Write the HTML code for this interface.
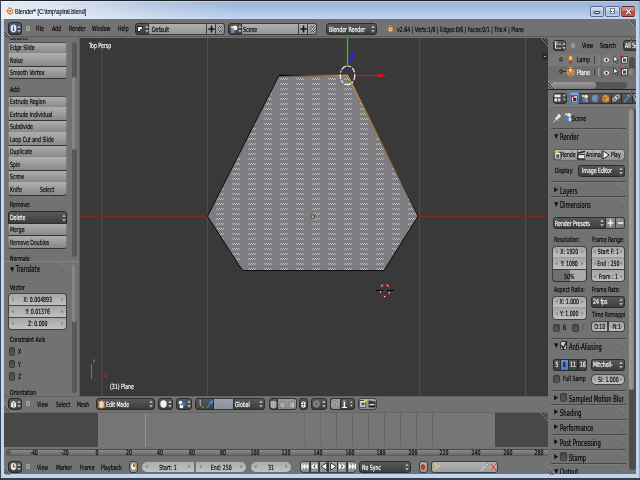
<!DOCTYPE html>
<html><head><meta charset="utf-8"><title>Blender</title>
<style>
html,body{margin:0;padding:0;width:640px;height:480px;overflow:hidden;background:#727272}
#w{position:absolute;left:0;top:0;width:640px;height:480px;overflow:hidden;background:#cfdcee;font-family:"DejaVu Sans","Liberation Sans",sans-serif}
#w div,#w span,#w svg{position:absolute;box-sizing:border-box}
.t{font-size:7px;line-height:8px;white-space:nowrap;transform:scaleX(.665);transform-origin:0 0;color:#000;filter:blur(.25px);-webkit-text-stroke:.18px}
.w{color:#fff}
.p{font-size:8.1px;line-height:9px;transform:scaleX(.65)}
.c{text-align:center;transform-origin:50% 0}
.hd{background:#727272}
.btn{background:linear-gradient(#adadad,#898989);border-left:1px solid rgba(40,40,40,.28);border-right:1px solid rgba(40,40,40,.28);border-radius:2px}
.dk{background:linear-gradient(#585858,#3e3e3e);border:1px solid #2c2c2c;border-radius:2.5px}
.num{background:linear-gradient(#a6a6a6,#c0c0c0);border:1px solid rgba(20,20,20,.7)}
.lt{background:linear-gradient(#afafaf,#959595);border:1px solid #3e3e3e}
.sep{height:1px;background:#4e4e4e;left:551px;width:75px}
.chk{background:linear-gradient(#464646,#595959);border:1px solid #3a3a3a;border-radius:2px;width:7px;height:9px}
.trk{background:#575757;border-radius:3px}
.thm{background:linear-gradient(90deg,#8e8e8e,#6e6e6e);border-radius:3px}
</style></head><body>
<div id="w">
<!-- window frame -->
<div style="left:0;top:0;width:640px;height:19px;background:linear-gradient(90deg,rgba(255,255,255,.72) 0,rgba(255,255,255,.6) 60px,rgba(255,255,255,.25) 150px,rgba(255,255,255,0) 240px),linear-gradient(#b6cfec 0,#b6cfec 1.6px,#9bb5d6 2.2px,#a6bedd 8px,#b4cae7 14px,#bfd5f0 18.5px)"></div>
<div style="left:0;top:19px;width:640px;height:461px;background:#bdd6f2"></div>
<div style="left:0;top:0;width:640px;height:1px;background:#1e2028"></div>
<div style="left:0;top:0;width:1px;height:480px;background:#3a4656"></div>
<div style="left:639px;top:1px;width:1px;height:479px;background:#3cc8f0"></div>
<div style="left:636px;top:19px;width:3px;height:459px;background:linear-gradient(90deg,#bcd6f0,#c8d4ec)"></div>
<div style="left:0;top:478.3px;width:640px;height:2px;background:#3a3d44"></div>
<span class="t" id="title" style="left:14.5px;top:6.5px;font-family:'Liberation Sans',sans-serif;font-size:7.5px;line-height:9px;color:#15152a;transform:scaleX(.73);-webkit-text-stroke:.2px #15152a">Blender* [C:\tmp\spiral.blend]</span>
<svg style="left:4.5px;top:6px" width="9" height="9" viewBox="0 0 9 9"><path d="M.4 5.4L4 2L3.2 1.2H5L7.6 3.2A3.2 3.2 0 1 1 2 5.4z" fill="#e8820e"/><circle cx="5.2" cy="5" r="1.9" fill="#fff"/><circle cx="5.2" cy="5" r="1" fill="#2a5aa0"/></svg>
<!-- caption buttons -->
<div style="left:590px;top:6px;width:14px;height:10.6px;border:1px solid #5c6c8c;border-radius:2px;background:linear-gradient(#c6d8f0 0,#c0d2ec 45%,#a2bade 50%,#aec4e4 100%);box-shadow:inset 0 0 0 .6px rgba(255,255,255,.55)"></div>
<div style="left:593.8px;top:10.9px;width:6.4px;height:3.2px;background:#f4f4f4;border:1px solid #3a4050;border-radius:1px"></div>
<div style="left:605.4px;top:6px;width:14.3px;height:10.6px;border:1px solid #5c6c8c;border-radius:2px;background:linear-gradient(#c6d8f0 0,#c0d2ec 45%,#a2bade 50%,#aec4e4 100%);box-shadow:inset 0 0 0 .6px rgba(255,255,255,.55)"></div>
<div style="left:610.2px;top:8.4px;width:5.2px;height:5.4px;background:#f8f8f8;border:.6px solid #7a8498"></div>
<div style="left:611.4px;top:10.6px;width:1.1px;height:1.1px;background:#2a3040"></div><div style="left:613.2px;top:10.6px;width:1.1px;height:1.1px;background:#2a3040"></div>
<div style="left:621.2px;top:6px;width:13.6px;height:10.6px;border:1px solid #6a2424;border-left-color:#a04a40;border-right-color:#a04a40;border-radius:2px;background:linear-gradient(#dc9486 0,#d47c6c 45%,#c4462c 50%,#cc5a3c 100%)"></div>
<svg style="left:625px;top:7.8px" width="7" height="7" viewBox="0 0 7 7"><path d="M1 .8L6 6.2M6 .8L1 6.2" stroke="#3a2020" stroke-width="2.2"/><path d="M1 .8L6 6.2M6 .8L1 6.2" stroke="#fff" stroke-width="1.3"/></svg>
<!-- info header -->
<div class="hd" id="info" style="left:4px;top:19px;width:632px;height:19px">
<div class="dk" style="left:4px;top:3px;width:13.5px;height:13px;border-radius:3px"></div>
<svg style="left:5.5px;top:5px" width="7" height="9" viewBox="0 0 7 9"><ellipse cx="3.5" cy="4.5" rx="3.2" ry="4.2" fill="#e8ecf4" stroke="#3a5a9a" stroke-width=".8"/><path d="M3.5 3.6V7M3.5 1.8v1" stroke="#2a4a90" stroke-width="1.3"/></svg>
<svg style="left:13px;top:5.5px" width="4" height="8" viewBox="0 0 4 8"><path d="M2 0.3L3.8 3H.2zM2 7.7L3.8 5H.2z" fill="#b0b0b0"/></svg>
<div style="left:22px;top:6.5px;width:4.2px;height:5.2px;background:#8c8c8c;border:1px solid #a6a6a6;border-radius:1px"></div>
<span class="t" style="left:32px;top:6.4px">File</span>
<span class="t" style="left:48px;top:6.4px">Add</span>
<span class="t" style="left:64.5px;top:6.4px">Render</span>
<span class="t" style="left:87.5px;top:6.4px">Window</span>
<span class="t" style="left:113.5px;top:6.4px">Help</span>
<!-- screen selector -->
<div class="dk" style="left:131px;top:4px;width:14px;height:11.5px;border-radius:3px 0 0 3px"></div>
<div style="left:133px;top:6.5px;width:6px;height:6.5px;background:#f4f4f4;border:1px solid #222"></div><div style="left:136px;top:9.5px;width:3px;height:3.5px;background:#444"></div>
<svg style="left:140.5px;top:6px" width="4" height="8" viewBox="0 0 4 8"><path d="M2 0.3L3.8 3H.2zM2 7.7L3.8 5H.2z" fill="#b0b0b0"/></svg>
<div class="lt" style="left:145px;top:4px;width:58px;height:11.5px;border-left:0"></div>
<span class="t" style="left:148px;top:6.9px">Default</span>
<div class="lt" style="left:203px;top:4px;width:9px;height:11.5px;border-left:0"></div>
<svg style="left:204px;top:6px" width="7" height="8" viewBox="0 0 7 8"><path d="M3.5 .5V7.5M.3 4H6.7" stroke="#111" stroke-width="1.5"/></svg>
<div class="lt" style="left:212px;top:4px;width:8.5px;height:11.5px;border-left:0;border-radius:0 3px 3px 0"></div>
<svg style="left:213px;top:6px" width="7" height="8" viewBox="0 0 7 8"><path d="M1.2 1.2L5.8 6.8M5.8 1.2L1.2 6.8" stroke="#2a2a2a" stroke-width="2"/><path d="M1.2 1.2L5.8 6.8M5.8 1.2L1.2 6.8" stroke="#f4f4f4" stroke-width="1"/></svg>
<!-- scene selector -->
<div class="dk" style="left:223.5px;top:4px;width:14.5px;height:11.5px;border-radius:3px 0 0 3px"></div>
<svg style="left:225.5px;top:5.5px" width="8" height="9" viewBox="0 0 8 9"><circle cx="5" cy="3" r="2.4" fill="#f4f4f8"/><rect x="1" y="3.5" width="3.4" height="4.6" fill="#5a8ad8"/><circle cx="2" cy="2.2" r="1.3" fill="#f0d040"/></svg>
<svg style="left:233.5px;top:6px" width="4" height="8" viewBox="0 0 4 8"><path d="M2 0.3L3.8 3H.2zM2 7.7L3.8 5H.2z" fill="#b0b0b0"/></svg>
<div class="lt" style="left:238px;top:4px;width:57px;height:11.5px;border-left:0"></div>
<span class="t" style="left:239px;top:6.9px">Scene</span>
<div class="lt" style="left:295px;top:4px;width:9px;height:11.5px;border-left:0"></div>
<svg style="left:296px;top:6px" width="7" height="8" viewBox="0 0 7 8"><path d="M3.5 .5V7.5M.3 4H6.7" stroke="#111" stroke-width="1.5"/></svg>
<div class="lt" style="left:304px;top:4px;width:9px;height:11.5px;border-left:0;border-radius:0 3px 3px 0"></div>
<svg style="left:305px;top:6px" width="7" height="8" viewBox="0 0 7 8"><path d="M1.2 1.2L5.8 6.8M5.8 1.2L1.2 6.8" stroke="#2a2a2a" stroke-width="2"/><path d="M1.2 1.2L5.8 6.8M5.8 1.2L1.2 6.8" stroke="#f4f4f4" stroke-width="1"/></svg>
<!-- engine -->
<div class="dk" style="left:321.5px;top:4px;width:51.5px;height:11.5px;border-radius:3px"></div>
<span class="t w" style="left:324.5px;top:6.9px">Blender Render</span>
<svg style="left:367px;top:6px" width="4" height="8" viewBox="0 0 4 8"><path d="M2 0.3L3.8 3H.2zM2 7.7L3.8 5H.2z" fill="#b0b0b0"/></svg>
<svg style="left:381.5px;top:6px" width="8" height="8" viewBox="0 0 8 8"><path d="M0.2 4.6L3.6 1.2L3 .6h1.6L7 2.6A2.9 2.9 0 1 1 1.6 4.6z" fill="#e87a0c"/><circle cx="4.6" cy="4.4" r="1.7" fill="#fff"/><circle cx="4.6" cy="4.4" r=".9" fill="#2a5aa0"/></svg>
<span class="t" id="stats" style="left:392.5px;top:6.9px">v2.64 | Verts:1/6 | Edges:0/6 | Faces:0/1 | Tris:4 | Plane</span>
<div id="infoline" style="left:0;top:17.4px;width:632px;height:1px;background:#5a5a5a"></div>
</div>
<!-- tool shelf -->
<div id="tools" style="left:4px;top:38px;width:76px;height:358px;background:#727272;overflow:hidden">
<span class="t" style="left:6px;top:-4.5px;">Deform:</span>
<div class="btn" style="left:3.8px;top:3.6000000000000014px;width:59.2px;height:12.5px;border-radius:3px 3px 0 0;border-bottom:1px solid rgba(25,25,25,0);border-top:1px solid rgba(50,50,50,.7);"></div>
<span class="t" style="left:5.9px;top:6.300000000000002px;">Edge Slide</span>
<div class="btn" style="left:3.8px;top:16.1px;width:59.2px;height:12.5px;border-radius:0;border-bottom:1px solid rgba(25,25,25,.8);"></div>
<span class="t" style="left:5.9px;top:18.8px;">Noise</span>
<div class="btn" style="left:3.8px;top:28.599999999999994px;width:59.2px;height:12.5px;border-radius:0 0 3px 3px;border-bottom:1px solid rgba(25,25,25,.8);"></div>
<span class="t" style="left:5.9px;top:31.299999999999994px;">Smooth Vertex</span>
<span class="t" style="left:6px;top:48px;">Add:</span>
<div class="btn" style="left:3.8px;top:57.5px;width:59.2px;height:12.5px;border-radius:3px 3px 0 0;border-bottom:1px solid rgba(25,25,25,0);border-top:1px solid rgba(50,50,50,.7);"></div>
<span class="t" style="left:5.9px;top:60.2px;">Extrude Region</span>
<div class="btn" style="left:3.8px;top:70.0px;width:59.2px;height:12.5px;border-radius:0;border-bottom:1px solid rgba(25,25,25,.8);"></div>
<span class="t" style="left:5.9px;top:72.7px;">Extrude Individual</span>
<div class="btn" style="left:3.8px;top:82.5px;width:59.2px;height:12.5px;border-radius:0;border-bottom:1px solid rgba(25,25,25,0);"></div>
<span class="t" style="left:5.9px;top:85.2px;">Subdivide</span>
<div class="btn" style="left:3.8px;top:95.0px;width:59.2px;height:12.5px;border-radius:0;border-bottom:1px solid rgba(25,25,25,.8);"></div>
<span class="t" style="left:5.9px;top:97.7px;">Loop Cut and Slide</span>
<div class="btn" style="left:3.8px;top:107.5px;width:59.2px;height:12.5px;border-radius:0;border-bottom:1px solid rgba(25,25,25,0);"></div>
<span class="t" style="left:5.9px;top:110.2px;">Duplicate</span>
<div class="btn" style="left:3.8px;top:120.0px;width:59.2px;height:12.5px;border-radius:0;border-bottom:1px solid rgba(25,25,25,.8);"></div>
<span class="t" style="left:5.9px;top:122.7px;">Spin</span>
<div class="btn" style="left:3.8px;top:132.5px;width:59.2px;height:12.5px;border-radius:0;border-bottom:1px solid rgba(25,25,25,0);"></div>
<span class="t" style="left:5.9px;top:135.2px;">Screw</span>
<div class="btn" style="left:3.8px;top:145.0px;width:59.2px;height:12.5px;border-radius:0 0 3px 3px;border-bottom:1px solid rgba(25,25,25,.8);"></div>
<span class="t" style="left:5.9px;top:147.7px;">Knife</span>
<span class="t" style="left:35.5px;top:147.7px;">Select</span>
<span class="t" style="left:6px;top:163.3px;">Remove:</span>
<div class="dk" style="left:3.8px;top:173.2px;width:59.2px;height:12.8px;border-radius:3px 3px 0 0;"></div>
<span class="t w" style="left:5.9px;top:175.89999999999998px;">Delete</span>
<svg style="left:58px;top:175.5px" width="4" height="8" viewBox="0 0 4 8"><path d="M2 0.3L3.8 3H.2zM2 7.7L3.8 5H.2z" fill="#b0b0b0"/></svg>
<div class="btn" style="left:3.8px;top:185.7px;width:59.2px;height:12.5px;border-radius:0;border-bottom:1px solid rgba(25,25,25,.8);"></div>
<span class="t" style="left:5.9px;top:188.39999999999998px;">Merge</span>
<div class="btn" style="left:3.8px;top:198.2px;width:59.2px;height:12.5px;border-radius:0 0 3px 3px;border-bottom:1px solid rgba(25,25,25,.8);"></div>
<span class="t" style="left:5.9px;top:200.89999999999998px;">Remove Doubles</span>
<span class="t" style="left:6px;top:216.9px;">Normals:</span>
<div class="trk" style="left:67.5px;top:3.5px;width:5.5px;height:215px"></div>
<div class="thm" style="left:67.5px;top:38.5px;width:5.5px;height:73px"></div>
<div style="left:0;top:222.5px;width:76px;height:140px;background:#727272;border-top:1px solid #858585"></div>
<svg style="left:6px;top:228.60000000000002px" width="4.4" height="5" viewBox="0 0 4.4 5"><path d="M.1 .3H4.3L2.2 4.9z" fill="#111"/></svg>
<span class="t p" style="left:11.5px;top:226.7px;">Translate</span>
<svg style="left:54px;top:224px" width="9" height="10" viewBox="0 0 9 10"><path d="M1 1L8 6M1 3.5L8 8.5" stroke="#8c8c8c" stroke-width="1"/><path d="M1 2L8 7M1 4.5L8 9.5" stroke="#5a5a5a" stroke-width=".7"/></svg>
<span class="t" style="left:5.5px;top:245.60000000000002px;">Vector</span>
<div class="num" style="left:3.5px;top:255.2px;width:59.5px;height:12.8px;border-radius:4px 4px 0 0"></div>
<span class="t c" style="left:3.5px;top:258.0px;width:59.5px">X: 0.004893</span>
<svg style="left:7px;top:259.2px" width="3" height="5" viewBox="0 0 3 5"><path d="M2.6 .6V4.4L.4 2.5z" fill="#858585"/></svg>
<svg style="left:56.5px;top:259.2px" width="3" height="5" viewBox="0 0 3 5"><path d="M.4 .6V4.4L2.6 2.5z" fill="#858585"/></svg>
<div class="num" style="left:3.5px;top:267.2px;width:59.5px;height:12.8px;border-radius:0"></div>
<span class="t c" style="left:3.5px;top:270.0px;width:59.5px">Y: 0.01376</span>
<svg style="left:7px;top:271.2px" width="3" height="5" viewBox="0 0 3 5"><path d="M2.6 .6V4.4L.4 2.5z" fill="#858585"/></svg>
<svg style="left:56.5px;top:271.2px" width="3" height="5" viewBox="0 0 3 5"><path d="M.4 .6V4.4L2.6 2.5z" fill="#858585"/></svg>
<div class="num" style="left:3.5px;top:279.2px;width:59.5px;height:12.8px;border-radius:0 0 4px 4px"></div>
<span class="t c" style="left:3.5px;top:282.0px;width:59.5px">Z: 0.000</span>
<svg style="left:7px;top:283.2px" width="3" height="5" viewBox="0 0 3 5"><path d="M2.6 .6V4.4L.4 2.5z" fill="#858585"/></svg>
<svg style="left:56.5px;top:283.2px" width="3" height="5" viewBox="0 0 3 5"><path d="M.4 .6V4.4L2.6 2.5z" fill="#858585"/></svg>
<span class="t" style="left:5.5px;top:298.2px;">Constraint Axis</span>
<div class="chk" style="left:4.5px;top:309.3px;width:6.5px;height:8.6px"></div>
<span class="t" style="left:13.5px;top:310.3px;">X</span>
<div class="chk" style="left:4.5px;top:321.7px;width:6.5px;height:8.6px"></div>
<span class="t" style="left:13.5px;top:322.7px;">Y</span>
<div class="chk" style="left:4.5px;top:334.1px;width:6.5px;height:8.6px"></div>
<span class="t" style="left:13.5px;top:335.1px;">Z</span>
<span class="t" style="left:5.5px;top:351px;">Orientation</span>
<div class="trk" style="left:67.5px;top:225.5px;width:5.5px;height:129px"></div>
<div class="thm" style="left:67.5px;top:225.5px;width:5.5px;height:58.5px"></div>
<div style="left:75px;top:0;width:1px;height:358px;background:#5e5e5e"></div>
</div>
<!-- viewport -->
<div id="vp" style="left:80px;top:38px;width:468px;height:358px;background:#393939;overflow:hidden">
<svg style="left:0;top:0" width="468" height="358" viewBox="80 38 468 358">
<defs>
<clipPath id="hx"><polygon points="279.5,76 347.5,76 417.3,216.3 383.5,270 243,270 208.3,216.3"/></clipPath>
<linearGradient id="eg" x1="279" x2="348" y1="0" y2="0" gradientUnits="userSpaceOnUse"><stop offset="0" stop-color="#000"/><stop offset=".35" stop-color="#5a3a08"/><stop offset="1" stop-color="#f09a10"/></linearGradient>
<linearGradient id="eg2" x1="348" y1="75.5" x2="418" y2="216.3" gradientUnits="userSpaceOnUse"><stop offset="0" stop-color="#f09a10"/><stop offset=".45" stop-color="#a86a10"/><stop offset="1" stop-color="#1a1208"/></linearGradient>
</defs>
<g stroke="#505050" stroke-width="1"><path d="M101.8 37V397M207.6 37V397M419.6 37V397M525.5 37V397"/></g>
<path d="M79 216.5H548" stroke="#7a2828" stroke-width="1"/>
<polygon points="279,75.5 348,75.5 418,216.3 384,270.3 242.5,270.3 207.5,216.3" fill="#7c7c81"/>
<g clip-path="url(#hx)" shape-rendering="crispEdges" fill="none" stroke="#bcbcc0" stroke-width="1">
<path stroke-dasharray="1 1 1 1 1 1 1 8 1 1 1 1 1 1 1 10" d="M185 78.5H420M185 83.5H420M185 88.5H420M185 93.5H420M185 98.5H420M185 103.5H420M185 108.5H420M185 113.5H420M185 118.5H420M185 123.5H420M185 128.5H420M185 133.5H420M185 138.5H420M185 143.5H420M185 148.5H420M185 153.5H420M185 158.5H420M185 163.5H420M185 168.5H420M185 173.5H420M185 178.5H420M185 183.5H420M185 188.5H420M185 193.5H420M185 198.5H420M185 203.5H420M185 208.5H420M185 213.5H420M185 218.5H420M185 223.5H420M185 228.5H420M185 233.5H420M185 238.5H420M185 243.5H420M185 248.5H420M185 253.5H420M185 258.5H420M185 263.5H420M185 268.5H420"/>
<path stroke-dasharray="1 1 1 1 1 1 1 10 1 1 1 1 1 1 1 8" d="M184 79.5H420M184 84.5H420M184 89.5H420M184 94.5H420M184 99.5H420M184 104.5H420M184 109.5H420M184 114.5H420M184 119.5H420M184 124.5H420M184 129.5H420M184 134.5H420M184 139.5H420M184 144.5H420M184 149.5H420M184 154.5H420M184 159.5H420M184 164.5H420M184 169.5H420M184 174.5H420M184 179.5H420M184 184.5H420M184 189.5H420M184 194.5H420M184 199.5H420M184 204.5H420M184 209.5H420M184 214.5H420M184 219.5H420M184 224.5H420M184 229.5H420M184 234.5H420M184 239.5H420M184 244.5H420M184 249.5H420M184 254.5H420M184 259.5H420M184 264.5H420M184 269.5H420"/>
</g>
<path d="M279 75.5L207.5 216.3L242.5 270.5H384L418 216.3" fill="none" stroke="#0a0a0a" stroke-width=".95" stroke-linejoin="round"/>
<path d="M418 216.3L348 75.5" fill="none" stroke="url(#eg2)" stroke-width="1"/>
<path d="M279 75.5H348" stroke="url(#eg)" stroke-width="1.3"/>
<!-- origin dot -->
<rect x="311.6" y="214.6" width="3" height="4" rx="1" fill="#1a1a1a"/><rect x="311.9" y="215.2" width="2" height="2.8" fill="#f0a030"/>
<!-- manipulator -->
<path d="M347.5 37V67" stroke="#1fd01f" stroke-width="1.3"/>
<path d="M354 75.5H380" stroke="#e01010" stroke-width="1.2"/>
<path d="M378 73.2L387 75.5L378 77.8Z" fill="#e01010"/>
<path d="M353.8 50C351.6 52 349.8 56.5 350.8 60.5C353.2 58.5 354.6 54 353.8 50Z" fill="#2525e0" stroke="#2525e0" stroke-width=".6"/>
<path d="M350.6 62l-.8 1.8M349.6 66.6l-.5 1.2M348.6 70l-.3 1" stroke="#2525e0" stroke-width="1" />
<ellipse cx="347.5" cy="75.3" rx="7.3" ry="9.4" fill="none" stroke="#fff" stroke-width="1.1" stroke-dasharray="5 1.6 2 1.2 6 2 3 1.4"/>
<!-- 3d cursor -->
<ellipse cx="385" cy="290.4" rx="4.6" ry="6.2" fill="none" stroke="#f01010" stroke-width="1.2" stroke-dasharray="1.6 1.6"/>
<ellipse cx="385" cy="290.4" rx="4.6" ry="6.2" fill="none" stroke="#fff" stroke-width="1.2" stroke-dasharray="1.2 5.2" stroke-dashoffset="-1.8"/>
<path d="M376 290.4H383M387 290.4H394" stroke="#000" stroke-width="1"/>
<!-- mini axis -->
<path d="M91.5 379.5V364" stroke="#22b022" stroke-width="1.1"/>
<path d="M91 379.5H103" stroke="#b01414" stroke-width="1.1"/>
<path d="M104.2 374.2l2.6 3.6M106.8 374.2l-2.6 3.6" stroke="#c02020" stroke-width=".8" fill="none"/>
<path d="M93.2 359.5l1 2.2M95.2 359.5l-1.8 4" stroke="#22b022" stroke-width=".8" fill="none"/>
</svg>
<span class="t w" style="left:8.6px;top:3.6px">Top Persp</span>
<span class="t w" style="left:29.8px;top:344.6px">(31) Plane</span>
<div style="left:461.5px;top:14.5px;width:7px;height:7px;background:#2c2c2c;border-radius:2px 0 0 2px"></div>
<div style="left:464px;top:17.5px;width:2px;height:1px;background:#aaa"></div>
</div>
<div class="hd" id="h3d" style="left:4px;top:396px;width:544px;height:16px">
<div style="left:0;top:0;width:544px;height:1px;background:#646464"></div>
<div class="dk" style="left:4px;top:2px;width:13.5px;height:11.5px;border-radius:3px"></div>
<svg style="left:5.5px;top:3.5px" width="7" height="9" viewBox="0 0 7 9"><path d="M.5 2L3.5 .6L6.5 2V7L3.5 8.4L.5 7z" fill="#e8e8e8" stroke="#222" stroke-width=".5"/><path d="M3.5 3.4V8.4M.5 2L3.5 3.4L6.5 2" stroke="#555" stroke-width=".5" fill="none"/></svg>
<svg style="left:13px;top:4px" width="4" height="8" viewBox="0 0 4 8"><path d="M2 0.3L3.8 3H.2zM2 7.7L3.8 5H.2z" fill="#b0b0b0"/></svg>
<div style="left:22px;top:5px;width:4.2px;height:5.2px;background:#8c8c8c;border:1px solid #a6a6a6;border-radius:1px"></div>
<span class="t" style="left:33px;top:5.199999999999989px;">View</span>
<span class="t" style="left:51.5px;top:5.199999999999989px;">Select</span>
<span class="t" style="left:73px;top:5.199999999999989px;">Mesh</span>
<div class="dk" style="left:92px;top:2px;width:58.5px;height:11.5px;border-radius:3px"></div>
<svg style="left:93.5px;top:3.5px" width="7" height="9" viewBox="0 0 7 9"><path d="M1 2L3.5 .8L6 2V7L3.5 8.2L1 7z" fill="#d8d8d8" stroke="#e8881a" stroke-width=".9"/><circle cx="1" cy="2" r=".9" fill="#f0901a"/><circle cx="6" cy="7" r=".9" fill="#f0901a"/><circle cx="1" cy="7" r=".9" fill="#f0901a"/><circle cx="6" cy="2" r=".9" fill="#f0901a"/></svg>
<span class="t w" style="left:101.5px;top:5.199999999999989px;">Edit Mode</span>
<svg style="left:144.5px;top:4px" width="4" height="8" viewBox="0 0 4 8"><path d="M2 0.3L3.8 3H.2zM2 7.7L3.8 5H.2z" fill="#b0b0b0"/></svg>
<div class="dk" style="left:153.5px;top:2px;width:15.5px;height:11.5px;border-radius:3px"></div>
<svg style="left:155.5px;top:3.8000000000000114px" width="7" height="8" viewBox="0 0 7 8"><ellipse cx="3.5" cy="4" rx="3.2" ry="3.7" fill="#f2f2f2"/></svg>
<svg style="left:164px;top:4px" width="4" height="8" viewBox="0 0 4 8"><path d="M2 0.3L3.8 3H.2zM2 7.7L3.8 5H.2z" fill="#b0b0b0"/></svg>
<div class="dk" style="left:172px;top:2px;width:16px;height:11.5px;border-radius:3px"></div>
<svg style="left:174px;top:3.5px" width="8" height="9" viewBox="0 0 8 9"><circle cx="2.6" cy="2.6" r="1.9" fill="#fff"/><circle cx="5.6" cy="4.2" r="1.9" fill="#3a78e0"/><circle cx="3.4" cy="6.4" r="1.9" fill="#fff"/><circle cx="3.9" cy="4.4" r="1" fill="#3a78e0"/></svg>
<svg style="left:183px;top:4px" width="4" height="8" viewBox="0 0 4 8"><path d="M2 0.3L3.8 3H.2zM2 7.7L3.8 5H.2z" fill="#b0b0b0"/></svg>
<div class="dk" style="left:191px;top:2px;width:19px;height:11.5px;border-radius:3px 0 0 3px"></div>
<svg style="left:192px;top:3px" width="9" height="10" viewBox="0 0 9 10"><path d="M4.2 6.2V.6" stroke="#a8c4f4" stroke-width="1"/><path d="M4.2 6.2L.6 9.2" stroke="#e02020" stroke-width="1.1"/><path d="M4.2 6.2L8 9" stroke="#20c020" stroke-width="1.1"/></svg>
<svg style="left:201.5px;top:3px" width="8" height="10" viewBox="0 0 8 10"><path d="M1 9L5 3.6" stroke="#3a78e0" stroke-width="1.6"/><path d="M3.4 3.2L7 .8L6.4 5z" fill="#4a8af0"/></svg>
<div style="left:210px;top:2px;width:18.5px;height:11.5px;background:linear-gradient(#a2a2a2,#909090);border-top:1px solid #333;border-bottom:1px solid #333"></div>
<svg style="left:211px;top:3.5px" width="8" height="9" viewBox="0 0 8 9"><path d="M1.5 8C1.5 4.5 3.5 2 6.8 1.4" stroke="#6a9ad8" stroke-width="1.3" fill="none"/></svg>
<svg style="left:219.5px;top:3.5px" width="8" height="9" viewBox="0 0 8 9"><path d="M1 8L5.6 2.6" stroke="#7aa2dc" stroke-width="1.3"/><path d="M4.2 1.2H7.4V4.6H4.2z" fill="none" stroke="#7aa2dc" stroke-width=".9"/></svg>
<div class="dk" style="left:228.5px;top:2px;width:32px;height:11.5px;border-radius:0 3px 3px 0"></div>
<span class="t w" style="left:230.6px;top:5.199999999999989px;">Global</span>
<svg style="left:254.5px;top:4px" width="4" height="8" viewBox="0 0 4 8"><path d="M2 0.3L3.8 3H.2zM2 7.7L3.8 5H.2z" fill="#b0b0b0"/></svg>
<div class="dk" style="left:264.5px;top:2px;width:9.5px;height:11.5px;border-radius:3px 0 0 3px"></div>
<div style="left:274px;top:2px;width:18.5px;height:11.5px;background:linear-gradient(#9c9c9c,#8a8a8a);border:1px solid #333;border-left:0;border-radius:0 3px 3px 0"></div>
<svg style="left:266px;top:3.5px" width="7" height="9" viewBox="0 0 7 9"><path d="M1 2.2L3.5 1L6 2.2V7L3.5 8.2L1 7z" fill="#9a9a9a" stroke="#ddd" stroke-width=".6"/><path d="M3.5 3.4V8.2M1 2.2L3.5 3.4L6 2.2" stroke="#ddd" stroke-width=".5" fill="none"/><circle cx="1.2" cy="2.2" r=".9" fill="#f0a040"/></svg>
<svg style="left:275px;top:3.5px" width="7" height="9" viewBox="0 0 7 9"><path d="M1 2.2L3.5 1L6 2.2V7L3.5 8.2L1 7z" fill="#b4b4b4" stroke="#6a6a6a" stroke-width=".6"/><path d="M3.5 3.4V8.2M1 2.2L3.5 3.4L6 2.2" stroke="#6a6a6a" stroke-width=".5" fill="none"/><path d="M3.5 3.4V8.2" stroke="#d89a58" stroke-width=".8"/></svg>
<svg style="left:284px;top:3.5px" width="7" height="9" viewBox="0 0 7 9"><path d="M1 2.2L3.5 1L6 2.2V7L3.5 8.2L1 7z" fill="#b4b4b4" stroke="#6a6a6a" stroke-width=".6"/><path d="M3.5 3.4V8.2M1 2.2L3.5 3.4L6 2.2" stroke="#6a6a6a" stroke-width=".5" fill="none"/><path d="M3.7 3.6L6 2.5V6.9L3.7 8z" fill="#e8b888"/></svg>
<div class="dk" style="left:294.5px;top:2px;width:9px;height:11.5px;border-radius:3px"></div>
<svg style="left:295.5px;top:3.5px" width="7" height="9" viewBox="0 0 7 9"><path d="M1 2.2L3.5 1L6 2.2V7L3.5 8.2L1 7z" fill="#eee" stroke="#222" stroke-width=".5"/><path d="M1.6 4.5H5.4M3.5 2.4V7" stroke="#333" stroke-width=".9" stroke-dasharray="1 .7"/></svg>
<div class="dk" style="left:307px;top:2px;width:16px;height:11.5px;border-radius:3px"></div>
<svg style="left:309px;top:3.8000000000000114px" width="7" height="8" viewBox="0 0 7 8"><ellipse cx="3.5" cy="4" rx="2.8" ry="3.3" fill="#777" stroke="#999" stroke-width=".8"/><circle cx="3.5" cy="4" r="1" fill="#555"/></svg>
<svg style="left:317.5px;top:4px" width="4" height="8" viewBox="0 0 4 8"><path d="M2 0.3L3.8 3H.2zM2 7.7L3.8 5H.2z" fill="#b0b0b0"/></svg>
<div style="left:325.5px;top:2px;width:10px;height:11.5px;background:linear-gradient(#a2a2a2,#8c8c8c);border:1px solid #333;border-right:0;border-radius:3px 0 0 3px"></div>
<svg style="left:327px;top:3.8000000000000114px" width="7" height="8" viewBox="0 0 7 8"><path d="M1.6 6.6A2.6 2.9 0 1 1 5.4 6.6" fill="none" stroke="#5c5c5c" stroke-width="2.2"/><path d="M1.6 6.6A2.6 2.9 0 1 1 5.4 6.6" fill="none" stroke="#cfcfcf" stroke-width="1.1"/></svg>
<div class="dk" style="left:335.5px;top:2px;width:15px;height:11.5px;border-radius:0 3px 3px 0"></div>
<svg style="left:336.5px;top:3.3000000000000114px" width="7" height="9" viewBox="0 0 7 9"><path d="M3.4 1.4V8.4" stroke="#fff" stroke-width="1.6"/><circle cx="3.4" cy="1.8" r="1.3" fill="#4a8af0"/><path d="M1 8.5H6" stroke="#fff" stroke-width="1"/></svg>
<svg style="left:345.5px;top:5px" width="3" height="6" viewBox="0 0 3 6"><rect x=".6" y=".6" width="1.6" height="1.4" fill="#ddd"/><rect x=".6" y="3.8" width="1.6" height="1.4" fill="#ddd"/></svg>
<div class="lt" style="left:354px;top:2px;width:18.5px;height:11.5px;border-radius:3px;background:linear-gradient(#a8a8a8,#8e8e8e)"></div>
<svg style="left:355px;top:3.3000000000000114px" width="8" height="9" viewBox="0 0 8 9"><rect x=".8" y="1.6" width="6" height="6.6" fill="#e8e8e8" stroke="#222" stroke-width=".7"/><circle cx="4" cy="5" r="1.8" fill="#555"/><circle cx="6.4" cy="1.6" r="1.4" fill="#f0d030"/></svg>
<svg style="left:363.5px;top:3.3000000000000114px" width="8" height="9" viewBox="0 0 8 9"><rect x=".6" y="3.4" width="6.8" height="5" fill="#1a1a1a"/><path d="M.6 1.2L7.4 2.2V3.4H.6z" fill="#222"/><path d="M1.6 1.6l1 .2M3.6 1.9l1 .2M5.6 2.2l1 .2" stroke="#eee" stroke-width=".8"/><rect x="1.4" y="4.8" width="5" height="1.6" fill="#ddd"/></svg>
</div>
<div id="tl" style="left:4px;top:412px;width:544px;height:35.2px;background:#767676;overflow:hidden;border-top:1px solid #666">
<div style="left:0;top:0;width:93.5px;height:36px;background:#484848"></div>
<div style="left:491px;top:0;width:53px;height:36px;background:#484848"></div>
<div style="left:299.5px;top:0;width:1px;height:36px;background:#666;opacity:0.55"></div>
<div style="left:315.5px;top:0;width:1px;height:36px;background:#666;opacity:0.55"></div>
<div style="left:331.5px;top:0;width:1px;height:36px;background:#666;opacity:1"></div>
<div style="left:347.5px;top:0;width:1px;height:36px;background:#666;opacity:1"></div>
<div style="left:363.5px;top:0;width:1px;height:36px;background:#666;opacity:1"></div>
<div style="left:379.5px;top:0;width:1px;height:36px;background:#666;opacity:1"></div>
<div style="left:395.5px;top:0;width:1px;height:36px;background:#666;opacity:1"></div>
<div style="left:411.5px;top:0;width:1px;height:36px;background:#666;opacity:1"></div>
<div style="left:427.5px;top:0;width:1px;height:36px;background:#666;opacity:1"></div>
<div style="left:141px;top:0;width:1.3px;height:36px;background:#5fc234"></div>
</div>
<div id="ruler" style="left:4px;top:447px;width:544px;height:10px;background:#727272;overflow:hidden">
<div style="left:1.5px;top:1.8px;width:548px;height:7.4px;border-radius:3.7px;background:linear-gradient(#8b8b8b,#696969);border:1px solid rgba(40,40,40,.45)"></div>
<div style="left:2.5px;top:3px;width:4px;height:5px;border-radius:2px;background:#5c5c5c"></div>
<span class="t c" style="left:9.840000000000003px;top:1.7px;width:40px">-40</span>
<span class="t c" style="left:41.42px;top:1.7px;width:40px">-20</span>
<span class="t c" style="left:73.0px;top:1.7px;width:40px">0</span>
<span class="t c" style="left:104.57999999999998px;top:1.7px;width:40px">20</span>
<span class="t c" style="left:136.16px;top:1.7px;width:40px">40</span>
<span class="t c" style="left:167.74px;top:1.7px;width:40px">60</span>
<span class="t c" style="left:199.32px;top:1.7px;width:40px">80</span>
<span class="t c" style="left:230.9px;top:1.7px;width:40px">100</span>
<span class="t c" style="left:262.48px;top:1.7px;width:40px">120</span>
<span class="t c" style="left:294.06px;top:1.7px;width:40px">140</span>
<span class="t c" style="left:325.64px;top:1.7px;width:40px">160</span>
<span class="t c" style="left:357.21999999999997px;top:1.7px;width:40px">180</span>
<span class="t c" style="left:388.8px;top:1.7px;width:40px">200</span>
<span class="t c" style="left:420.38px;top:1.7px;width:40px">220</span>
<span class="t c" style="left:451.96px;top:1.7px;width:40px">240</span>
<span class="t c" style="left:483.53999999999996px;top:1.7px;width:40px">260</span>
<span class="t c" style="left:515.12px;top:1.7px;width:40px">280</span>
</div>
<div class="hd" id="tlh" style="left:4px;top:456.5px;width:544px;height:17.8px">
<div class="dk" style="left:4px;top:4.5px;width:13.5px;height:11.5px;border-radius:3px"></div>
<svg style="left:5.5px;top:5.800000000000011px" width="7" height="9" viewBox="0 0 7 9"><ellipse cx="3.5" cy="4.5" rx="3.1" ry="4" fill="#f0f0f0" stroke="#333" stroke-width=".6"/><path d="M3.5 4.5V1.8M3.5 4.5H5.4" stroke="#333" stroke-width=".7"/><circle cx="3.5" cy="4.5" r=".9" fill="#e02020"/></svg>
<svg style="left:13px;top:6.5px" width="4" height="8" viewBox="0 0 4 8"><path d="M2 0.3L3.8 3H.2zM2 7.7L3.8 5H.2z" fill="#b0b0b0"/></svg>
<div style="left:22px;top:7.5px;width:4.2px;height:5.2px;background:#8c8c8c;border:1px solid #a6a6a6;border-radius:1px"></div>
<span class="t" style="left:33px;top:7.600000000000023px;">View</span>
<span class="t" style="left:52px;top:7.600000000000023px;">Marker</span>
<span class="t" style="left:75.5px;top:7.600000000000023px;">Frame</span>
<span class="t" style="left:96.5px;top:7.600000000000023px;">Playback</span>
<div class="lt" style="left:124.5px;top:4.5px;width:9.5px;height:11.5px;border-radius:3px"></div>
<svg style="left:126px;top:5.800000000000011px" width="7" height="9" viewBox="0 0 7 9"><ellipse cx="3.5" cy="4.5" rx="3" ry="3.9" fill="#f4f4f4" stroke="#444" stroke-width=".6"/><path d="M3.5 4.5L3.5 .8A3 3.9 0 0 1 6.4 4.5z" fill="#f08a1a"/><path d="M3.5 4.5V2M3.5 4.5H5" stroke="#222" stroke-width=".6"/></svg>
<div class="num" style="left:137px;top:4.5px;width:54px;height:11.5px;border-radius:6px 0 0 6px;border-color:rgba(30,30,30,.45);background:linear-gradient(#acacac,#c2c2c2)"></div>
<span class="t c" style="left:137px;top:7.5px;width:54px">Start: 1</span>
<svg style="left:141px;top:7.899999999999977px" width="3" height="5" viewBox="0 0 3 5"><path d="M2.6 .6V4.4L.4 2.5z" fill="#858585"/></svg>
<svg style="left:184px;top:7.899999999999977px" width="3" height="5" viewBox="0 0 3 5"><path d="M.4 .6V4.4L2.6 2.5z" fill="#858585"/></svg>
<div class="num" style="left:190.5px;top:4.5px;width:52.5px;height:11.5px;border-radius:0 6px 6px 0;border-color:rgba(30,30,30,.45);background:linear-gradient(#acacac,#c2c2c2)"></div>
<span class="t c" style="left:190.5px;top:7.5px;width:52.5px">End: 250</span>
<svg style="left:194.5px;top:7.899999999999977px" width="3" height="5" viewBox="0 0 3 5"><path d="M2.6 .6V4.4L.4 2.5z" fill="#858585"/></svg>
<svg style="left:236.0px;top:7.899999999999977px" width="3" height="5" viewBox="0 0 3 5"><path d="M.4 .6V4.4L2.6 2.5z" fill="#858585"/></svg>
<div class="num" style="left:246px;top:4.5px;width:42px;height:11.5px;border-radius:6px;border-color:rgba(30,30,30,.45);background:linear-gradient(#acacac,#c2c2c2)"></div>
<span class="t c" style="left:246px;top:7.5px;width:42px">31</span>
<svg style="left:250px;top:7.899999999999977px" width="3" height="5" viewBox="0 0 3 5"><path d="M2.6 .6V4.4L.4 2.5z" fill="#858585"/></svg>
<svg style="left:281px;top:7.899999999999977px" width="3" height="5" viewBox="0 0 3 5"><path d="M.4 .6V4.4L2.6 2.5z" fill="#858585"/></svg>
<div class="lt" style="left:296px;top:4.5px;width:10.0px;height:11.5px;border-radius:3px 0 0 3px;background:linear-gradient(#a4a4a4,#8a8a8a)"></div>
<svg style="left:296.8px;top:5.800000000000011px" width="8.4" height="9" viewBox="0 0 8.4 9"><path d="M1 1.5V7.5" stroke="#fff" stroke-width="1.2"/><path d="M4.4 1.5V7.5L1.6 4.5zM7.4 1.5V7.5L4.6 4.5z" fill="#fff"/></svg>
<div class="lt" style="left:305.5px;top:4.5px;width:9.699999999999989px;height:11.5px;border-radius:0;background:linear-gradient(#a4a4a4,#8a8a8a)"></div>
<svg style="left:306.3px;top:5.800000000000011px" width="8.4" height="9" viewBox="0 0 8.4 9"><path d="M4.2 1.5V7.5L1 4.5zM7.4 1.5V7.5L4.2 4.5z" fill="#fff"/><circle cx="4.2" cy="4.5" r=".8" fill="#222"/></svg>
<div class="lt" style="left:314.7px;top:4.5px;width:9.800000000000011px;height:11.5px;border-radius:0;background:linear-gradient(#a4a4a4,#8a8a8a)"></div>
<svg style="left:315.5px;top:5.800000000000011px" width="8.4" height="9" viewBox="0 0 8.4 9"><path d="M6.8 .8V8.2L1.2 4.5z" fill="#fff" stroke="#111" stroke-width=".8"/></svg>
<div class="lt" style="left:324px;top:4.5px;width:9.899999999999977px;height:11.5px;border-radius:0;background:linear-gradient(#a4a4a4,#8a8a8a)"></div>
<svg style="left:324.8px;top:5.800000000000011px" width="8.4" height="9" viewBox="0 0 8.4 9"><path d="M1.6 .8V8.2L7.2 4.5z" fill="#fff" stroke="#111" stroke-width=".8"/></svg>
<div class="lt" style="left:333.4px;top:4.5px;width:9.900000000000034px;height:11.5px;border-radius:0;background:linear-gradient(#a4a4a4,#8a8a8a)"></div>
<svg style="left:334.2px;top:5.800000000000011px" width="8.4" height="9" viewBox="0 0 8.4 9"><path d="M1 1.5V7.5L4.2 4.5zM4.2 1.5V7.5L7.4 4.5z" fill="#fff"/><circle cx="4.2" cy="4.5" r=".8" fill="#222"/></svg>
<div class="lt" style="left:342.8px;top:4.5px;width:9.699999999999989px;height:11.5px;border-radius:0 3px 3px 0;background:linear-gradient(#a4a4a4,#8a8a8a)"></div>
<svg style="left:343.6px;top:5.800000000000011px" width="8.4" height="9" viewBox="0 0 8.4 9"><path d="M7.4 1.5V7.5" stroke="#fff" stroke-width="1.2"/><path d="M1 1.5V7.5L3.8 4.5zM4 1.5V7.5L6.8 4.5z" fill="#fff"/></svg>
<div class="dk" style="left:355px;top:4.5px;width:51.5px;height:11.5px;border-radius:3px"></div>
<span class="t w" style="left:358px;top:7.5px;">No Sync</span>
<svg style="left:400.5px;top:6.5px" width="4" height="8" viewBox="0 0 4 8"><path d="M2 0.3L3.8 3H.2zM2 7.7L3.8 5H.2z" fill="#b0b0b0"/></svg>
<div class="lt" style="left:414.5px;top:4.5px;width:9.5px;height:11.5px;border-radius:3px"></div>
<svg style="left:416px;top:6.5px" width="6" height="8" viewBox="0 0 6 8"><ellipse cx="3" cy="4" rx="1.7" ry="2.4" fill="#e82a1a" stroke="#7a1a10" stroke-width=".5"/></svg>
<div class="lt" style="left:426.5px;top:4.5px;width:67.5px;height:11.5px;border-radius:3px;background:linear-gradient(#b4b4b4,#9c9c9c)"></div>
<svg style="left:428px;top:5.5px" width="9" height="10" viewBox="0 0 9 10"><path d="M2 1L5.4 6.4" stroke="#e8d040" stroke-width="1.3"/><path d="M1 8.6L7.6 3.2" stroke="#f4f4f4" stroke-width="1.2"/><path d="M1 8.6L7.6 3.2" stroke="#444" stroke-width=".4"/></svg>
<svg style="left:476px;top:5.5px" width="9" height="10" viewBox="0 0 9 10"><path d="M1 8.6L7.6 2.2" stroke="#f4f4f4" stroke-width="1.3"/><path d="M1 8.6L7.6 2.2" stroke="#444" stroke-width=".4"/><circle cx="7" cy="2.6" r="1.4" fill="#ddd" stroke="#444" stroke-width=".4"/></svg>
<svg style="left:484.5px;top:5.5px" width="9" height="10" viewBox="0 0 9 10"><path d="M1.4 8.6L6.6 2.2" stroke="#f4f4f4" stroke-width="1.3"/><path d="M1.4 8.6L6.6 2.2" stroke="#444" stroke-width=".4"/><path d="M1.6 1.6L7 8.6M7 1.6L1.6 8.6" stroke="#e02020" stroke-width=".9"/></svg>
</div>
<div id="right" style="left:548px;top:38px;width:88px;height:436.3px;background:#727272;overflow:hidden">
<div class="dk" style="left:4.5px;top:1.5px;width:13.5px;height:11.5px;border-radius:3px"></div>
<svg style="left:5.5px;top:3px" width="8" height="9" viewBox="0 0 8 9"><path d="M1.5 .8V7.2M1.5 3.2H4M1.5 7.2H4" stroke="#eee" stroke-width=".9" fill="none"/><path d="M.6 .9H4" stroke="#f0c060" stroke-width="1"/><path d="M4.6 3.2H7M4.6 7.2H7" stroke="#ddd" stroke-width="1"/></svg>
<svg style="left:13.5px;top:3.5px" width="4" height="8" viewBox="0 0 4 8"><path d="M2 0.3L3.8 3H.2zM2 7.7L3.8 5H.2z" fill="#b0b0b0"/></svg>
<div style="left:22.5px;top:5px;width:4.2px;height:5.2px;background:#8c8c8c;border:1px solid #a6a6a6;border-radius:2px"></div>
<span class="t" style="left:34px;top:3.799999999999997px;">View</span>
<span class="t" style="left:52px;top:3.799999999999997px;">Search</span>
<div class="dk" style="left:74.5px;top:1.5px;width:30px;height:11.5px;border-radius:3px"></div>
<span class="t w" style="left:77px;top:3.799999999999997px;">All Scenes</span>
<div style="left:0;top:15.5px;width:88px;height:12px;background:#787878"></div>
<div style="left:0;top:27.5px;width:88px;height:12.5px;background:#6e6e6e"></div>
<div style="left:52.5px;top:15.5px;width:1px;height:25px;background:#626262"></div>
<div style="left:71.5px;top:15.5px;width:1px;height:25px;background:#626262"></div>
<svg style="left:10.5px;top:18.5px" width="4" height="5" viewBox="0 0 4 5"><ellipse cx="2" cy="2.5" rx="1.3" ry="1.7" fill="none" stroke="#111" stroke-width=".8"/></svg>
<svg style="left:19px;top:16.5px" width="7" height="10" viewBox="0 0 7 10"><ellipse cx="3.5" cy="3" rx="2.2" ry="2.6" fill="#f6c070" stroke="#b05a10" stroke-width=".7"/><path d="M2.4 5.6H4.6V9H2.4z" fill="#c06a18"/><path d="M2.2 6.8H4.8M2.2 8H4.8" stroke="#4a2808" stroke-width=".6"/></svg>
<span class="t" style="left:28.5px;top:18px;">Lamp</span>
<div style="left:46px;top:17.5px;width:1px;height:8px;background:#4a4a4a"></div>
<div style="left:50.700000000000045px;top:16px;width:1px;height:11px;background:repeating-linear-gradient(#b89040 0 1px,transparent 1px 3px)"></div>
<svg style="left:54.5px;top:19px" width="7" height="6" viewBox="0 0 7 6"><path d="M.3 3C1.4 -.2 5.6 -.2 6.7 3C5.6 6.2 1.4 6.2 .3 3z" fill="#f0f0f0" stroke="#444" stroke-width=".5"/><ellipse cx="3.5" cy="3.1" rx="1" ry="1.3" fill="#1a1a1a"/></svg>
<svg style="left:65px;top:16.5px" width="6" height="9" viewBox="0 0 6 9"><path d="M.8 .6V7L2.4 5.6L3.6 8.4L4.6 8L3.4 5.2H5.4z" fill="#fff" stroke="#111" stroke-width=".7"/></svg>
<svg style="left:73px;top:16.5px" width="7" height="9" viewBox="0 0 7 9"><rect x=".6" y="1.6" width="6" height="6.4" fill="#e8e8e8" stroke="#222" stroke-width=".7"/><rect x="2" y="3.6" width="3.2" height="3" fill="#444"/><circle cx="1.8" cy="1.8" r="1.2" fill="#e02020"/></svg>
<svg style="left:54.5px;top:31.5px" width="7" height="6" viewBox="0 0 7 6"><path d="M.3 3C1.4 -.2 5.6 -.2 6.7 3C5.6 6.2 1.4 6.2 .3 3z" fill="#f0f0f0" stroke="#444" stroke-width=".5"/><ellipse cx="3.5" cy="3.1" rx="1" ry="1.3" fill="#1a1a1a"/></svg>
<svg style="left:65px;top:29.0px" width="6" height="9" viewBox="0 0 6 9"><path d="M.8 .6V7L2.4 5.6L3.6 8.4L4.6 8L3.4 5.2H5.4z" fill="#fff" stroke="#111" stroke-width=".7"/></svg>
<svg style="left:73px;top:29.0px" width="7" height="9" viewBox="0 0 7 9"><rect x=".6" y="1.6" width="6" height="6.4" fill="#e8e8e8" stroke="#222" stroke-width=".7"/><rect x="2" y="3.6" width="3.2" height="3" fill="#444"/><circle cx="1.8" cy="1.8" r="1.2" fill="#e02020"/></svg>
<svg style="left:10.5px;top:31px" width="8" height="5" viewBox="0 0 8 5"><ellipse cx="2" cy="2.5" rx="1.3" ry="1.7" fill="none" stroke="#111" stroke-width=".8"/><path d="M3.4 2.5H8" stroke="#111" stroke-width=".7"/></svg>
<svg style="left:17.5px;top:28px" width="9" height="11" viewBox="0 0 9 11"><ellipse cx="4.5" cy="5.5" rx="4" ry="5" fill="#e89a40" opacity=".85"/><path d="M2 2.4H7L4.5 9z" fill="#f4d8b0" stroke="#8a4a10" stroke-width=".7"/><circle cx="2" cy="2.4" r=".8" fill="#a04a08"/><circle cx="7" cy="2.4" r=".8" fill="#a04a08"/><circle cx="4.5" cy="9" r=".8" fill="#a04a08"/></svg>
<span class="t w" style="left:28.5px;top:30.5px;">Plane</span>
<div style="left:46px;top:30px;width:1px;height:8px;background:#4a4a4a"></div>
<svg style="left:48.5px;top:29px" width="4" height="10" viewBox="0 0 4 10"><path d="M3 .6C1 3 1 7 3 9.4" stroke="#bbb" stroke-width="1" fill="none"/></svg>
<div class="trk" style="left:81px;top:18.5px;width:6px;height:19px;background:#4e4e4e"></div>
<div class="thm" style="left:81.29999999999995px;top:30px;width:5.4px;height:7.5px"></div>
<div class="trk" style="left:2.5px;top:44px;width:76px;height:6.5px;background:#565656"></div>
<div style="left:2.5px;top:44px;width:45.5px;height:6.5px;border-radius:3px;background:linear-gradient(#9a9a9a,#767676)"></div>
<div style="left:0;top:51px;width:88px;height:1.2px;background:#1e1e1e"></div>
<div class="dk" style="left:4.5px;top:54.5px;width:14px;height:11px;border-radius:3px"></div>
<svg style="left:6px;top:56px" width="7" height="8" viewBox="0 0 7 8"><rect x=".4" y=".6" width="6" height="2.6" fill="#e8e8e8"/><rect x=".4" y="4.4" width="2.6" height="3" fill="#e8e8e8"/><rect x="3.8" y="4.4" width="2.6" height="3" fill="#cfcfcf"/></svg>
<svg style="left:14.5px;top:56.2px" width="3" height="7" viewBox="0 0 3 7"><rect x=".6" y=".6" width="1.6" height="1.6" fill="#ccc"/><rect x=".6" y="4.6" width="1.6" height="1.6" fill="#ccc"/></svg>
<div style="left:21.5px;top:54.5px;width:70px;height:11px;background:linear-gradient(#5a5a5a,#4a4a4a);border:1px solid #333;border-radius:3px 0 0 3px"></div>
<div style="left:21.799999999999955px;top:54.2px;width:9.6px;height:11.6px;background:#8aa4d0;border:1.2px solid #5a86d6;border-radius:2px"></div>
<svg style="left:23px;top:55.5px" width="7" height="9" viewBox="0 0 7 9"><rect x=".6" y="1.8" width="5.8" height="6.2" fill="#f0f0f0" stroke="#222" stroke-width=".7"/><rect x="2" y="3.6" width="3.4" height="3.4" fill="#333"/><circle cx="2" cy="2.2" r="1.2" fill="#e02020"/></svg>
<svg style="left:32.5px;top:55.5px" width="8" height="9" viewBox="0 0 8 9"><circle cx="5" cy="2.6" r="1.9" fill="#e8e8ee"/><rect x="1.4" y="3.4" width="2.6" height="4.8" fill="#4a7ad0"/><rect x="4.6" y="5" width="2" height="3.2" fill="#9aa8b8"/><circle cx="2.2" cy="2" r="1.2" fill="#e8d050"/></svg>
<svg style="left:42.5px;top:55.8px" width="8" height="9" viewBox="0 0 8 9"><ellipse cx="4" cy="4.4" rx="3.3" ry="3.9" fill="#5a86c8"/><path d="M2 3C3 1.6 5 2 5.4 3.6C4.6 5 3.4 4.6 3 6.4C1.8 5.8 1.4 4.2 2 3z" fill="#7aa870"/></svg>
<svg style="left:53px;top:55.5px" width="9" height="9" viewBox="0 0 9 9"><path d="M1 2.4L4.5 .8L8 2.4V7L4.5 8.6L1 7z" fill="#d89a58"/><path d="M4.5 4V8.6L1 7V2.4z" fill="#b87838"/><path d="M1 2.4L4.5 4L8 2.4" stroke="#7a4a18" stroke-width=".5" fill="none"/></svg>
<div style="left:62.799999999999955px;top:55px;width:1px;height:10px;background:#2e2e2e"></div>
<svg style="left:64px;top:56px" width="8" height="8" viewBox="0 0 8 8"><ellipse cx="2.8" cy="5" rx="2.2" ry="1.5" transform="rotate(-40 2.8 5)" fill="none" stroke="#c8c8c8" stroke-width="1"/><ellipse cx="5.2" cy="3" rx="2.2" ry="1.5" transform="rotate(-40 5.2 3)" fill="none" stroke="#c8c8c8" stroke-width="1"/></svg>
<div style="left:73.29999999999995px;top:55px;width:1px;height:10px;background:#2e2e2e"></div>
<svg style="left:75px;top:55.8px" width="8" height="9" viewBox="0 0 8 9"><path d="M1.2 8L5 3.4" stroke="#5a8ad8" stroke-width="1.6"/><path d="M4.2 1.2C5.6 .2 7.4 1.2 7 3.2L5.8 2.4L5 3.6z" fill="#6a9ae8"/></svg>
<div style="left:84px;top:55px;width:1px;height:10px;background:#2e2e2e"></div>
<svg style="left:85px;top:56px" width="6" height="8" viewBox="0 0 6 8"><path d="M.6 1H5L2.8 7z" fill="none" stroke="#ddd" stroke-width=".8"/></svg>
<div style="left:0;top:66.7px;width:88px;height:1px;background:#838383"></div>
<svg style="left:5px;top:74.5px" width="8" height="10" viewBox="0 0 8 10"><path d="M.6 9.4L3.4 6" stroke="#eee" stroke-width=".9"/><path d="M2 4.6L5 7.6M2.8 5.6L5.6 1.6L7.4 3.4L3.8 6.4z" fill="#e8e8e8" stroke="#e8e8e8" stroke-width=".8"/><path d="M5.4 1.2L7.6 3.6" stroke="#fff" stroke-width="1.2"/></svg>
<svg style="left:15.5px;top:73.5px" width="8" height="10" viewBox="0 0 8 10"><circle cx="5" cy="3" r="2" fill="#e8e8ee"/><rect x="1.6" y="4" width="2.8" height="5" fill="#4a7ad0"/><rect x="4.8" y="5.6" width="2" height="3.4" fill="#eee"/><circle cx="2.2" cy="2.2" r="1.3" fill="#e8d050"/></svg>
<span class="t" style="left:24px;top:77.2px;">Scene</span>
<div style="left:3px;top:90.1px;width:75px;height:1px;background:#494949"></div>
<div style="left:3px;top:91.1px;width:75px;height:1px;background:#7c7c7c"></div>
<svg style="left:68.5px;top:92.6px" width="9" height="10" viewBox="0 0 9 10"><path d="M.6 .6L8.4 5.6M.6 3L8.4 8" stroke="#8e8e8e" stroke-width="1"/><path d="M.6 1.6L8.4 6.6M.6 4L8.4 9" stroke="#5c5c5c" stroke-width=".8"/></svg>
<div style="left:3px;top:143.4px;width:75px;height:1px;background:#494949"></div>
<div style="left:3px;top:144.4px;width:75px;height:1px;background:#7c7c7c"></div>
<svg style="left:68.5px;top:145.9px" width="9" height="10" viewBox="0 0 9 10"><path d="M.6 .6L8.4 5.6M.6 3L8.4 8" stroke="#8e8e8e" stroke-width="1"/><path d="M.6 1.6L8.4 6.6M.6 4L8.4 9" stroke="#5c5c5c" stroke-width=".8"/></svg>
<div style="left:3px;top:157.9px;width:75px;height:1px;background:#494949"></div>
<div style="left:3px;top:158.9px;width:75px;height:1px;background:#7c7c7c"></div>
<svg style="left:68.5px;top:160.4px" width="9" height="10" viewBox="0 0 9 10"><path d="M.6 .6L8.4 5.6M.6 3L8.4 8" stroke="#8e8e8e" stroke-width="1"/><path d="M.6 1.6L8.4 6.6M.6 4L8.4 9" stroke="#5c5c5c" stroke-width=".8"/></svg>
<div style="left:3px;top:299.5px;width:75px;height:1px;background:#494949"></div>
<div style="left:3px;top:300.5px;width:75px;height:1px;background:#7c7c7c"></div>
<svg style="left:68.5px;top:302px" width="9" height="10" viewBox="0 0 9 10"><path d="M.6 .6L8.4 5.6M.6 3L8.4 8" stroke="#8e8e8e" stroke-width="1"/><path d="M.6 1.6L8.4 6.6M.6 4L8.4 9" stroke="#5c5c5c" stroke-width=".8"/></svg>
<div style="left:3px;top:351.5px;width:75px;height:1px;background:#494949"></div>
<div style="left:3px;top:352.5px;width:75px;height:1px;background:#7c7c7c"></div>
<svg style="left:68.5px;top:354px" width="9" height="10" viewBox="0 0 9 10"><path d="M.6 .6L8.4 5.6M.6 3L8.4 8" stroke="#8e8e8e" stroke-width="1"/><path d="M.6 1.6L8.4 6.6M.6 4L8.4 9" stroke="#5c5c5c" stroke-width=".8"/></svg>
<div style="left:3px;top:366.0px;width:75px;height:1px;background:#494949"></div>
<div style="left:3px;top:367.0px;width:75px;height:1px;background:#7c7c7c"></div>
<svg style="left:68.5px;top:368.5px" width="9" height="10" viewBox="0 0 9 10"><path d="M.6 .6L8.4 5.6M.6 3L8.4 8" stroke="#8e8e8e" stroke-width="1"/><path d="M.6 1.6L8.4 6.6M.6 4L8.4 9" stroke="#5c5c5c" stroke-width=".8"/></svg>
<div style="left:3px;top:381.0px;width:75px;height:1px;background:#494949"></div>
<div style="left:3px;top:382.0px;width:75px;height:1px;background:#7c7c7c"></div>
<svg style="left:68.5px;top:383.5px" width="9" height="10" viewBox="0 0 9 10"><path d="M.6 .6L8.4 5.6M.6 3L8.4 8" stroke="#8e8e8e" stroke-width="1"/><path d="M.6 1.6L8.4 6.6M.6 4L8.4 9" stroke="#5c5c5c" stroke-width=".8"/></svg>
<div style="left:3px;top:395.5px;width:75px;height:1px;background:#494949"></div>
<div style="left:3px;top:396.5px;width:75px;height:1px;background:#7c7c7c"></div>
<svg style="left:68.5px;top:398px" width="9" height="10" viewBox="0 0 9 10"><path d="M.6 .6L8.4 5.6M.6 3L8.4 8" stroke="#8e8e8e" stroke-width="1"/><path d="M.6 1.6L8.4 6.6M.6 4L8.4 9" stroke="#5c5c5c" stroke-width=".8"/></svg>
<div style="left:3px;top:410.5px;width:75px;height:1px;background:#494949"></div>
<div style="left:3px;top:411.5px;width:75px;height:1px;background:#7c7c7c"></div>
<svg style="left:68.5px;top:413px" width="9" height="10" viewBox="0 0 9 10"><path d="M.6 .6L8.4 5.6M.6 3L8.4 8" stroke="#8e8e8e" stroke-width="1"/><path d="M.6 1.6L8.4 6.6M.6 4L8.4 9" stroke="#5c5c5c" stroke-width=".8"/></svg>
<div style="left:3px;top:425.25px;width:75px;height:1px;background:#494949"></div>
<div style="left:3px;top:426.25px;width:75px;height:1px;background:#7c7c7c"></div>
<svg style="left:68.5px;top:427.75px" width="9" height="10" viewBox="0 0 9 10"><path d="M.6 .6L8.4 5.6M.6 3L8.4 8" stroke="#8e8e8e" stroke-width="1"/><path d="M.6 1.6L8.4 6.6M.6 4L8.4 9" stroke="#5c5c5c" stroke-width=".8"/></svg>
<svg style="left:6.399999999999977px;top:95.79999999999998px" width="4.4" height="5" viewBox="0 0 4.4 5"><path d="M.1 .3H4.3L2.2 4.9z" fill="#111"/></svg>
<span class="t p" style="left:12.200000000000045px;top:95.19999999999999px;">Render</span>
<svg style="left:6.2000000000000455px;top:148.8px" width="4.2" height="5.4" viewBox="0 0 4.2 5.4"><path d="M.2 .1V5.3L4.1 2.7z" fill="#111"/></svg>
<span class="t p" style="left:12.200000000000045px;top:148.5px;">Layers</span>
<svg style="left:6.399999999999977px;top:163.6px" width="4.4" height="5" viewBox="0 0 4.4 5"><path d="M.1 .3H4.3L2.2 4.9z" fill="#111"/></svg>
<span class="t p" style="left:12.200000000000045px;top:163.0px;">Dimensions</span>
<svg style="left:6.399999999999977px;top:305.2px" width="4.4" height="5" viewBox="0 0 4.4 5"><path d="M.1 .3H4.3L2.2 4.9z" fill="#111"/></svg>
<div style="left:12px;top:303.4px;width:7px;height:8.4px;background:#c8c8c8;border:1px solid #333;border-radius:2px"></div>
<svg style="left:12.200000000000045px;top:301.6px" width="8" height="10" viewBox="0 0 8 10"><path d="M1.4 5.4L3.2 8.2L7 1.2" stroke="#111" stroke-width="1.3" fill="none"/></svg>
<span class="t p" style="left:21.399999999999977px;top:304.6px;">Anti-Aliasing</span>
<svg style="left:6.2000000000000455px;top:356.9px" width="4.2" height="5.4" viewBox="0 0 4.2 5.4"><path d="M.2 .1V5.3L4.1 2.7z" fill="#111"/></svg>
<div class="chk" style="left:12px;top:355.4px;width:6.8px;height:8.2px"></div>
<span class="t p" style="left:21.399999999999977px;top:356.6px;">Sampled Motion Blur</span>
<svg style="left:6.2000000000000455px;top:371.4px" width="4.2" height="5.4" viewBox="0 0 4.2 5.4"><path d="M.2 .1V5.3L4.1 2.7z" fill="#111"/></svg>
<span class="t p" style="left:12.200000000000045px;top:371.1px;">Shading</span>
<svg style="left:6.2000000000000455px;top:386.4px" width="4.2" height="5.4" viewBox="0 0 4.2 5.4"><path d="M.2 .1V5.3L4.1 2.7z" fill="#111"/></svg>
<span class="t p" style="left:12.200000000000045px;top:386.1px;">Performance</span>
<svg style="left:6.2000000000000455px;top:400.9px" width="4.2" height="5.4" viewBox="0 0 4.2 5.4"><path d="M.2 .1V5.3L4.1 2.7z" fill="#111"/></svg>
<span class="t p" style="left:12.200000000000045px;top:400.6px;">Post Processing</span>
<svg style="left:6.2000000000000455px;top:415.9px" width="4.2" height="5.4" viewBox="0 0 4.2 5.4"><path d="M.2 .1V5.3L4.1 2.7z" fill="#111"/></svg>
<div class="chk" style="left:12px;top:414.4px;width:6.8px;height:8.2px"></div>
<span class="t p" style="left:21.399999999999977px;top:415.6px;">Stamp</span>
<svg style="left:6.399999999999977px;top:430.95px" width="4.4" height="5" viewBox="0 0 4.4 5"><path d="M.1 .3H4.3L2.2 4.9z" fill="#111"/></svg>
<span class="t p" style="left:12.200000000000045px;top:430.35px;">Output</span>
<div class="lt" style="left:4.5px;top:111px;width:25.1px;height:12px;border-radius:4px 0 0 4px;background:linear-gradient(#b6b6b6,#939393);border-color:rgba(40,40,40,.55)"></div>
<div class="lt" style="left:29px;top:111px;width:24.6px;height:12px;border-radius:0;background:linear-gradient(#b6b6b6,#939393);border-color:rgba(40,40,40,.55)"></div>
<div class="lt" style="left:53px;top:111px;width:24.1px;height:12px;border-radius:0 4px 4px 0;background:linear-gradient(#b6b6b6,#939393);border-color:rgba(40,40,40,.55)"></div>
<svg style="left:5.5px;top:112px" width="8" height="10" viewBox="0 0 8 10"><rect x=".8" y="2.2" width="6" height="6.8" fill="#eee" stroke="#222" stroke-width=".7"/><rect x="2.2" y="4.4" width="3.2" height="3.4" fill="#555"/><circle cx="2.6" cy="2" r="1.5" fill="#f4d430"/></svg>
<span class="t" style="left:12.5px;top:113.30000000000001px;">Rende</span>
<svg style="left:29px;top:111.5px" width="9" height="11" viewBox="0 0 9 11"><path d="M.6 3.2L8 1.4" stroke="#111" stroke-width="1.3"/><path d="M.8 4.6H8.2M.8 6.6H8.2M.8 8.6H8.2" stroke="#111" stroke-width=".8"/><path d="M.8 4.6V9.6H8.2" stroke="#111" stroke-width=".7" fill="none"/><rect x="1.6" y="5.2" width="5.6" height="3" fill="#e8e8e8"/></svg>
<span class="t" style="left:38.299999999999955px;top:113.30000000000001px;">Anima</span>
<svg style="left:54px;top:112.19999999999999px" width="8" height="10" viewBox="0 0 8 10"><path d="M1 .8V9.2L7 5z" fill="#f4f4f4" stroke="#111" stroke-width=".9"/></svg>
<span class="t" style="left:63px;top:113.30000000000001px;">Play</span>
<span class="t" style="left:7px;top:129.4px;">Display:</span>
<div class="dk" style="left:30.299999999999955px;top:126.69999999999999px;width:46.5px;height:12px;border-radius:2.5px"></div>
<span class="t w" style="left:33.5px;top:129.2px;">Image Editor</span>
<svg style="left:70.5px;top:128.8px" width="4" height="8" viewBox="0 0 4 8"><path d="M2 0.3L3.8 3H.2zM2 7.7L3.8 5H.2z" fill="#b0b0b0"/></svg>
<div class="dk" style="left:4.5px;top:179.3px;width:53.5px;height:11.6px;border-radius:2.5px 0 0 2.5px"></div>
<span class="t w" style="left:7px;top:181.6px;">Render Presets</span>
<svg style="left:52px;top:181.2px" width="4" height="8" viewBox="0 0 4 8"><path d="M2 0.3L3.8 3H.2zM2 7.7L3.8 5H.2z" fill="#b0b0b0"/></svg>
<div style="left:58px;top:179.3px;width:9.6px;height:11.6px;background:linear-gradient(#8c8c8c,#7a7a7a);border:1px solid #3a3a3a;border-left:0"></div>
<svg style="left:59px;top:181px" width="7" height="8" viewBox="0 0 7 8"><path d="M3.5 .6V7.4M.6 4H6.4" stroke="#f4f4f4" stroke-width="1.5"/></svg>
<div style="left:67.60000000000002px;top:179.3px;width:9.2px;height:11.6px;background:linear-gradient(#8c8c8c,#7a7a7a);border:1px solid #3a3a3a;border-left:0;border-radius:0 3.5px 3.5px 0"></div>
<svg style="left:68.60000000000002px;top:181px" width="7" height="8" viewBox="0 0 7 8"><path d="M.8 4H6.2" stroke="#f4f4f4" stroke-width="1.6"/></svg>
<span class="t" style="left:6px;top:197.6px;">Resolution:</span>
<span class="t" style="left:44px;top:197.6px;">Frame Range:</span>
<div class="num" style="left:4px;top:207.7px;width:34.5px;height:12.4px;border-radius:4px 4px 0 0;border-bottom-color:rgba(60,60,60,.12);"></div>
<span class="t c" style="left:4px;top:210.0px;width:34.5px">X: 1920</span>
<svg style="left:6.6px;top:211.29999999999998px" width="3" height="5" viewBox="0 0 3 5"><path d="M2.6 .6V4.4L.4 2.5z" fill="#858585"/></svg>
<svg style="left:32.9px;top:211.29999999999998px" width="3" height="5" viewBox="0 0 3 5"><path d="M.4 .6V4.4L2.6 2.5z" fill="#858585"/></svg>
<div class="num" style="left:4px;top:219.60000000000002px;width:34.5px;height:12.7px;border-radius:0;border-top:0;"></div>
<span class="t c" style="left:4px;top:221.90000000000003px;width:34.5px">Y: 1080</span>
<svg style="left:6.6px;top:223.35000000000002px" width="3" height="5" viewBox="0 0 3 5"><path d="M2.6 .6V4.4L.4 2.5z" fill="#858585"/></svg>
<svg style="left:32.9px;top:223.35000000000002px" width="3" height="5" viewBox="0 0 3 5"><path d="M.4 .6V4.4L2.6 2.5z" fill="#858585"/></svg>
<div class="num" style="left:4px;top:232.3px;width:34.5px;height:12px;border-radius:0 0 4px 4px;border-top:0;background:linear-gradient(90deg,#707070 52%,#ababab 52%)"></div>
<span class="t c" style="left:4px;top:234.5px;width:34.5px">50%</span>
<div class="num" style="left:42.5px;top:207.7px;width:34.8px;height:12.4px;border-radius:4px 4px 0 0;border-bottom-color:rgba(60,60,60,.12);"></div>
<span class="t c" style="left:42.5px;top:210.0px;width:34.8px">Start F: 1</span>
<svg style="left:45.1px;top:211.29999999999998px" width="3" height="5" viewBox="0 0 3 5"><path d="M2.6 .6V4.4L.4 2.5z" fill="#858585"/></svg>
<svg style="left:71.7px;top:211.29999999999998px" width="3" height="5" viewBox="0 0 3 5"><path d="M.4 .6V4.4L2.6 2.5z" fill="#858585"/></svg>
<div class="num" style="left:42.5px;top:219.60000000000002px;width:34.8px;height:12.7px;border-radius:0;border-top:0;"></div>
<span class="t c" style="left:42.5px;top:221.90000000000003px;width:34.8px">End : 250</span>
<svg style="left:45.1px;top:223.35000000000002px" width="3" height="5" viewBox="0 0 3 5"><path d="M2.6 .6V4.4L.4 2.5z" fill="#858585"/></svg>
<svg style="left:71.7px;top:223.35000000000002px" width="3" height="5" viewBox="0 0 3 5"><path d="M.4 .6V4.4L2.6 2.5z" fill="#858585"/></svg>
<div class="num" style="left:42.5px;top:232.3px;width:34.8px;height:12px;border-radius:0 0 4px 4px;border-top:0;"></div>
<span class="t c" style="left:42.5px;top:234.60000000000002px;width:34.8px">Fram : 1</span>
<svg style="left:45.1px;top:235.70000000000002px" width="3" height="5" viewBox="0 0 3 5"><path d="M2.6 .6V4.4L.4 2.5z" fill="#858585"/></svg>
<svg style="left:71.7px;top:235.70000000000002px" width="3" height="5" viewBox="0 0 3 5"><path d="M.4 .6V4.4L2.6 2.5z" fill="#858585"/></svg>
<span class="t" style="left:6px;top:248px;">Aspect Ratio:</span>
<span class="t" style="left:44px;top:248px;">Frame Rate:</span>
<div class="num" style="left:4px;top:257.5px;width:34.5px;height:12.6px;border-radius:4px 4px 0 0;border-bottom-color:rgba(60,60,60,.12);"></div>
<span class="t c" style="left:4px;top:259.8px;width:34.5px">X: 1.000</span>
<svg style="left:6.6px;top:261.2px" width="3" height="5" viewBox="0 0 3 5"><path d="M2.6 .6V4.4L.4 2.5z" fill="#858585"/></svg>
<svg style="left:32.9px;top:261.2px" width="3" height="5" viewBox="0 0 3 5"><path d="M.4 .6V4.4L2.6 2.5z" fill="#858585"/></svg>
<div class="num" style="left:4px;top:269.6px;width:34.5px;height:12.4px;border-radius:0 0 4px 4px;border-top:0;"></div>
<span class="t c" style="left:4px;top:271.90000000000003px;width:34.5px">Y: 1.000</span>
<svg style="left:6.6px;top:273.2px" width="3" height="5" viewBox="0 0 3 5"><path d="M2.6 .6V4.4L.4 2.5z" fill="#858585"/></svg>
<svg style="left:32.9px;top:273.2px" width="3" height="5" viewBox="0 0 3 5"><path d="M.4 .6V4.4L2.6 2.5z" fill="#858585"/></svg>
<div class="dk" style="left:42.5px;top:257.5px;width:34.8px;height:12px;border-radius:2.5px"></div>
<span class="t w" style="left:45px;top:259.8px;">24 fps</span>
<svg style="left:71px;top:259.5px" width="4" height="8" viewBox="0 0 4 8"><path d="M2 0.3L3.8 3H.2zM2 7.7L3.8 5H.2z" fill="#b0b0b0"/></svg>
<span class="t" style="left:44px;top:272.5px;">Time Remappi</span>
<div class="chk" style="left:5px;top:285.6px;width:7.4px;height:8.8px"></div>
<span class="t" style="left:14.5px;top:286.3px;">B</span>
<div class="chk" style="left:24px;top:285.6px;width:7.4px;height:8.8px"></div>
<span class="t" style="left:33.5px;top:286.3px;color:#555">C</span>
<div class="num" style="left:42.5px;top:282.5px;width:17.4px;height:11.8px;border-radius:4px 0 0 4px;"></div>
<span class="t c" style="left:42.5px;top:284.8px;width:17.4px">O:10</span>
<svg style="left:45.1px;top:285.79999999999995px" width="3" height="5" viewBox="0 0 3 5"><path d="M2.6 .6V4.4L.4 2.5z" fill="#858585"/></svg>
<svg style="left:54.3px;top:285.79999999999995px" width="3" height="5" viewBox="0 0 3 5"><path d="M.4 .6V4.4L2.6 2.5z" fill="#858585"/></svg>
<div class="num" style="left:59.5px;top:282.5px;width:17.8px;height:11.8px;border-radius:0 4px 4px 0;"></div>
<span class="t c" style="left:59.5px;top:284.8px;width:17.8px">N:1</span>
<svg style="left:62.1px;top:285.79999999999995px" width="3" height="5" viewBox="0 0 3 5"><path d="M2.6 .6V4.4L.4 2.5z" fill="#858585"/></svg>
<svg style="left:71.7px;top:285.79999999999995px" width="3" height="5" viewBox="0 0 3 5"><path d="M.4 .6V4.4L2.6 2.5z" fill="#858585"/></svg>
<div style="left:4.5px;top:320.5px;width:8.0px;height:12.2px;background:linear-gradient(#555,#3e3e3e);border:1px solid #2c2c2c;border-radius:2px 0 0 2px"></div>
<span class="t c w" style="left:4.5px;top:323px;width:8.0px">5</span>
<div style="left:12px;top:320.5px;width:8.5px;height:12.2px;background:linear-gradient(#6090dc,#4a7cc8);border:1px solid #2c2c2c;border-radius:0"></div>
<span class="t c" style="left:12px;top:323px;width:8.5px">8</span>
<div style="left:20px;top:320.5px;width:10.0px;height:12.2px;background:linear-gradient(#555,#3e3e3e);border:1px solid #2c2c2c;border-radius:0"></div>
<span class="t c w" style="left:20px;top:323px;width:10.0px">11</span>
<div style="left:29.5px;top:320.5px;width:9.299999999999955px;height:12.2px;background:linear-gradient(#555,#3e3e3e);border:1px solid #2c2c2c;border-radius:0 2px 2px 0"></div>
<span class="t c w" style="left:29.5px;top:323px;width:9.299999999999955px">16</span>
<div class="dk" style="left:42.5px;top:320.5px;width:34.8px;height:12.2px;border-radius:2.5px"></div>
<span class="t w" style="left:45px;top:323px;">Mitchell-</span>
<svg style="left:71px;top:322.6px" width="4" height="8" viewBox="0 0 4 8"><path d="M2 0.3L3.8 3H.2zM2 7.7L3.8 5H.2z" fill="#b0b0b0"/></svg>
<div class="chk" style="left:5px;top:336.5px;width:7.4px;height:8.8px"></div>
<span class="t" style="left:14.5px;top:337.2px;">Full Samp</span>
<div class="num" style="left:42.5px;top:335.7px;width:34.8px;height:11.6px;border-radius:5px;"></div>
<span class="t c" style="left:42.5px;top:338.0px;width:34.8px">Si: 1.000</span>
<svg style="left:45.1px;top:338.9px" width="3" height="5" viewBox="0 0 3 5"><path d="M2.6 .6V4.4L.4 2.5z" fill="#858585"/></svg>
<svg style="left:71.7px;top:338.9px" width="3" height="5" viewBox="0 0 3 5"><path d="M.4 .6V4.4L2.6 2.5z" fill="#858585"/></svg>
<div class="trk" style="left:80.79999999999995px;top:71px;width:6.8px;height:361px;background:#4c4c4c"></div>
<div class="thm" style="left:81px;top:71px;width:5.2px;height:281px;background:linear-gradient(90deg,#9c9c9c,#838383)"></div>
</div>
<svg style="left:629px;top:19.5px" width="7" height="8" viewBox="0 0 7 8" opacity=".8"><path d="M0 0L7 8M2.6 0L7 5M5.2 0L7 2" stroke="#b4b4b4" stroke-width=".8"/><path d="M1.3 0L7 6.5M3.9 0L7 3.5" stroke="#141414" stroke-width=".9"/></svg>
<svg style="left:4px;top:29.5px" width="7" height="8" viewBox="0 0 7 8" opacity=".8"><path d="M0 0L7 8M0 3L4.4 8M0 6L1.8 8" stroke="#b4b4b4" stroke-width=".8"/><path d="M0 1.5L5.7 8M0 4.5L3.1 8" stroke="#141414" stroke-width=".9"/></svg>
<svg style="left:541px;top:38px" width="7" height="8" viewBox="0 0 7 8" opacity=".8"><path d="M0 0L7 8M2.6 0L7 5M5.2 0L7 2" stroke="#b4b4b4" stroke-width=".8"/><path d="M1.3 0L7 6.5M3.9 0L7 3.5" stroke="#141414" stroke-width=".9"/></svg>
<svg style="left:4px;top:403.5px" width="7" height="8" viewBox="0 0 7 8" opacity=".8"><path d="M0 0L7 8M0 3L4.4 8M0 6L1.8 8" stroke="#b4b4b4" stroke-width=".8"/><path d="M0 1.5L5.7 8M0 4.5L3.1 8" stroke="#141414" stroke-width=".9"/></svg>
<svg style="left:541px;top:412.5px" width="7" height="8" viewBox="0 0 7 8" opacity=".8"><path d="M0 0L7 8M2.6 0L7 5M5.2 0L7 2" stroke="#b4b4b4" stroke-width=".8"/><path d="M1.3 0L7 6.5M3.9 0L7 3.5" stroke="#141414" stroke-width=".9"/></svg>
<svg style="left:4px;top:466.5px" width="7" height="8" viewBox="0 0 7 8" opacity=".8"><path d="M0 0L7 8M0 3L4.4 8M0 6L1.8 8" stroke="#b4b4b4" stroke-width=".8"/><path d="M0 1.5L5.7 8M0 4.5L3.1 8" stroke="#141414" stroke-width=".9"/></svg>
<svg style="left:629px;top:38px" width="7" height="8" viewBox="0 0 7 8" opacity=".8"><path d="M0 0L7 8M2.6 0L7 5M5.2 0L7 2" stroke="#b4b4b4" stroke-width=".8"/><path d="M1.3 0L7 6.5M3.9 0L7 3.5" stroke="#141414" stroke-width=".9"/></svg>
<svg style="left:548px;top:81px" width="7" height="8" viewBox="0 0 7 8" opacity=".8"><path d="M0 0L7 8M0 3L4.4 8M0 6L1.8 8" stroke="#b4b4b4" stroke-width=".8"/><path d="M0 1.5L5.7 8M0 4.5L3.1 8" stroke="#141414" stroke-width=".9"/></svg>
<svg style="left:629px;top:90.5px" width="7" height="8" viewBox="0 0 7 8" opacity=".8"><path d="M0 0L7 8M2.6 0L7 5M5.2 0L7 2" stroke="#b4b4b4" stroke-width=".8"/><path d="M1.3 0L7 6.5M3.9 0L7 3.5" stroke="#141414" stroke-width=".9"/></svg>
<svg style="left:548px;top:466.5px" width="7" height="8" viewBox="0 0 7 8" opacity=".8"><path d="M0 0L7 8M0 3L4.4 8M0 6L1.8 8" stroke="#b4b4b4" stroke-width=".8"/><path d="M0 1.5L5.7 8M0 4.5L3.1 8" stroke="#141414" stroke-width=".9"/></svg>
</div>
</body></html>
